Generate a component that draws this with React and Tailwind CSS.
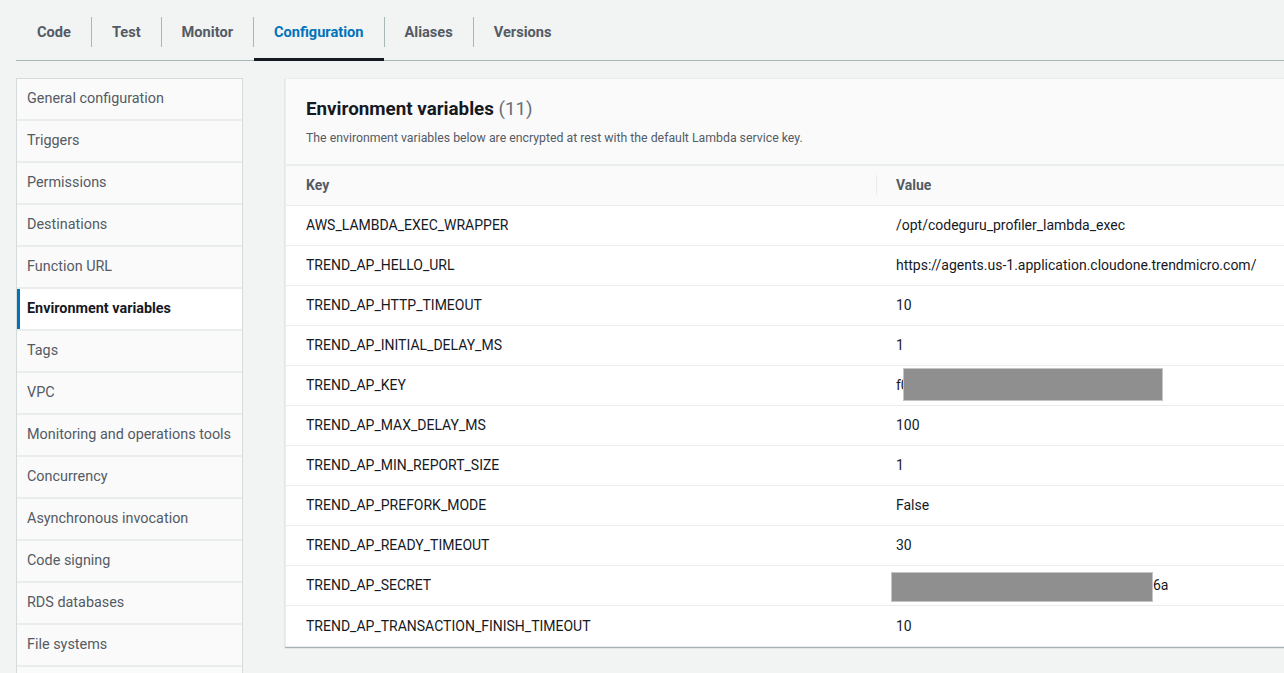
import React from "react";

const tabs = ["Code", "Test", "Monitor", "Configuration", "Aliases", "Versions"];
const navItems = [
  "General configuration",
  "Triggers",
  "Permissions",
  "Destinations",
  "Function URL",
  "Environment variables",
  "Tags",
  "VPC",
  "Monitoring and operations tools",
  "Concurrency",
  "Asynchronous invocation",
  "Code signing",
  "RDS databases",
  "File systems",
];

const rows = [
  ["AWS_LAMBDA_EXEC_WRAPPER", "/opt/codeguru_profiler_lambda_exec"],
  ["TREND_AP_HELLO_URL", "https://agents.us-1.application.cloudone.trendmicro.com/"],
  ["TREND_AP_HTTP_TIMEOUT", "10"],
  ["TREND_AP_INITIAL_DELAY_MS", "1"],
  ["TREND_AP_KEY", "KEY"],
  ["TREND_AP_MAX_DELAY_MS", "100"],
  ["TREND_AP_MIN_REPORT_SIZE", "1"],
  ["TREND_AP_PREFORK_MODE", "False"],
  ["TREND_AP_READY_TIMEOUT", "30"],
  ["TREND_AP_SECRET", "SECRET"],
  ["TREND_AP_TRANSACTION_FINISH_TIMEOUT", "10"],
];

function Value({ v }) {
  if (v === "KEY") {
    return (
      <div className="relative h-full flex items-center">
        <span>f0</span>
        <div className="absolute left-[7px] top-[2px] h-[33px] w-[260px] bg-[#8f8f8f] border border-[#c4c4c4]" />
      </div>
    );
  }
  if (v === "SECRET") {
    return (
      <div className="relative h-full flex items-center">
        <span className="pl-[257px]">6a</span>
        <div className="absolute left-[-5px] top-[6px] h-[30px] w-[262px] bg-[#8f8f8f] border border-[#c4c4c4]" />
      </div>
    );
  }
  return <span>{v}</span>;
}

export default function App() {
  return (
    <div className="min-h-[673px] h-[673px] overflow-hidden bg-[#f2f3f3] font-['Roboto','Liberation_Sans',sans-serif] text-[#16191f]">
      {/* Tabs */}
      <div className="ml-4 flex h-[61px] border-b border-[#aab7b8]">
        {tabs.map((t, i) => (
          <React.Fragment key={t}>
            {i > 0 && <div className="mt-[17px] h-[30px] w-px bg-[#aab7b8]" />}
            <div
              className={
                "relative flex items-center pt-[5px] text-[14.6px] font-bold " +
                (i === 0 ? "pl-[21px] pr-5 " : "px-5 ") +
                (t === "Configuration" ? "text-[#0073bb]" : "text-[#545b64]")
              }
            >
              {t}
              {t === "Configuration" && (
                <div className="absolute bottom-[-1px] left-0 right-0 h-[3px] bg-[#16191f]" />
              )}
            </div>
          </React.Fragment>
        ))}
      </div>

      <div className="flex pt-[17px]">
        {/* Sidebar */}
        <div className="ml-4 w-[227px] shrink-0 flex flex-col gap-[2px] bg-[#eaeded] border-x border-t border-[#d5dbdb]">
          {navItems.map((n) => {
            const active = n === "Environment variables";
            return (
              <div
                key={n}
                className={
                  "h-[40px] flex items-center text-[14.4px] " +
                  (active
                    ? "bg-white border-l-[3px] border-[#0073bb] pl-[7px] font-bold text-[#16191f]"
                    : "bg-[#fafafa] pl-[10px] text-[#545b64]")
                }
              >
                {n}
              </div>
            );
          })}
          <div className="h-[40px] bg-[#fafafa]" />
        </div>

        {/* Panel */}
        <div className="ml-[42px] w-[1020px] shrink-0 self-start bg-white border border-[#eaeded] shadow-[0_1px_1px_0_rgba(0,28,36,0.3)]">
          <div className="bg-[#fafafa] px-5 pt-[18px] pb-[18px]">
            <div className="text-[18.8px] leading-[24px] font-bold text-[#16191f]">
              Environment variables <span className="font-normal text-[#687078]">(11)</span>
            </div>
            <div className="mt-[9px] text-[12.3px] leading-[16px] text-[#545b64]">
              The environment variables below are encrypted at rest with the default Lambda service key.
            </div>
          </div>
          <div className="grid grid-cols-[590px_1fr] h-[42px] bg-[#fafafa] border-t-2 border-b border-[#eaeded] text-[14px] font-bold text-[#545b64]">
            <div className="flex items-center pl-5">Key</div>
            <div className="relative flex items-center pl-5">
              <div className="absolute left-0 top-[9px] h-[20px] w-px bg-[#eaeded]" />
              Value
            </div>
          </div>
          {rows.map(([k, v], i) => (
            <div
              key={k}
              className={
                "grid grid-cols-[590px_1fr] h-[40px] text-[14px] text-[#16191f] " +
                (i < rows.length - 1 ? "border-b border-[#eaeded]" : "")
              }
            >
              <div className="flex items-center pl-5">{k}</div>
              <div className="flex items-center pl-5">
                <Value v={v} />
              </div>
            </div>
          ))}
        </div>
      </div>
    </div>
  );
}
